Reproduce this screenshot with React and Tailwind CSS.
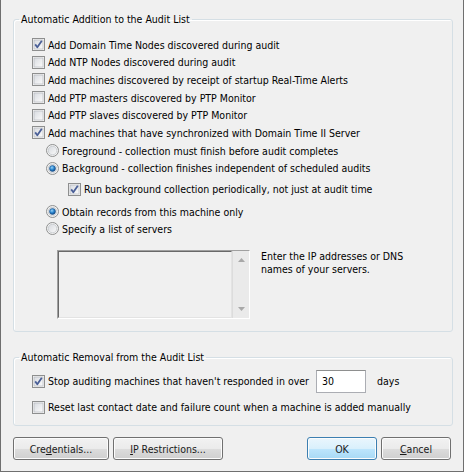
import React from "react";

const FONT = {
  fontFamily: '"DejaVu Sans Condensed", "DejaVu Sans", "Liberation Sans", sans-serif',
  fontStretch: "condensed",
};

function CheckBox({ checked }) {
  return (
    <svg width="13" height="13" viewBox="0 0 13 13" className="shrink-0">
      <defs>
        <linearGradient id="cbg" x1="0" y1="0" x2="1" y2="1">
          <stop offset="0" stopColor="#d8dbe0" />
          <stop offset="1" stopColor="#fbfbfb" />
        </linearGradient>
      </defs>
      <rect x="0.5" y="0.5" width="12" height="12" fill="#f4f4f4" stroke="#8e8f8f" />
      <rect x="2" y="2" width="9" height="9" fill="url(#cbg)" stroke="#aeb3b9" strokeWidth="0.6" />
      {checked && (
        <path d="M3.2 6.4 L5.3 9.2 L9.8 2.8" fill="none" stroke="#4a5f97" strokeWidth="1.8" strokeLinejoin="round" />
      )}
    </svg>
  );
}

function Radio({ checked }) {
  return (
    <svg width="13" height="13" viewBox="0 0 13 13" className="shrink-0">
      <defs>
        <linearGradient id="rbg" x1="0" y1="0" x2="1" y2="1">
          <stop offset="0" stopColor="#d6d9de" />
          <stop offset="1" stopColor="#fafafa" />
        </linearGradient>
        <radialGradient id="rdot" cx="0.4" cy="0.35" r="0.7">
          <stop offset="0" stopColor="#9ad3f7" />
          <stop offset="0.5" stopColor="#2b86cf" />
          <stop offset="1" stopColor="#0b3f7a" />
        </radialGradient>
      </defs>
      <circle cx="6.5" cy="6.5" r="6" fill="#f4f4f4" stroke="#8e8f8f" />
      <circle cx="6.5" cy="6.5" r="4.3" fill="url(#rbg)" stroke="#b6bac0" strokeWidth="0.6" />
      {checked && <circle cx="6.5" cy="6.5" r="3" fill="url(#rdot)" stroke="#1a4f86" strokeWidth="0.5" />}
    </svg>
  );
}

function CheckRow({ checked, children, className = "" }) {
  return (
    <div className={`flex items-center gap-[3px] ${className}`}>
      <CheckBox checked={checked} />
      <span className="whitespace-nowrap">{children}</span>
    </div>
  );
}

function RadioRow({ checked, children, className = "" }) {
  return (
    <div className={`flex items-center gap-[3px] ${className}`}>
      <Radio checked={checked} />
      <span className="whitespace-nowrap">{children}</span>
    </div>
  );
}

function Button({ children, def, className = "" }) {
  return (
    <div
      className={`h-[23px] rounded-[3px] border flex items-center justify-center text-[#1a1a1a] ${
        def
          ? "border-[#3c7fb1] bg-[linear-gradient(#eaf6fd_0%,#d9f0fc_50%,#bee6fd_50%,#a7d9f5_100%)] shadow-[inset_0_0_0_1px_#fcfcfc]"
          : "border-[#707070] bg-[linear-gradient(#f2f2f2_0%,#ebebeb_50%,#dddddd_50%,#cfcfcf_100%)] shadow-[inset_0_0_0_1px_#fcfcfc]"
      } ${className}`}
    >
      {children}
    </div>
  );
}

export default function App() {
  return (
    <div
      style={FONT}
      className="w-[464px] h-[472px] bg-[#f0f0f0] border-l border-r border-b border-[#6f6f6f] text-[10.5px] leading-[14px] text-black pt-[12px] pl-[12px] pr-[10px] flex flex-col"
    >
      <fieldset className="border border-[#d5dfe5] rounded-[3px] h-[320px] pl-[18px] pr-[10px] shadow-[inset_1px_1px_0_#ffffff]">
        <legend className="ml-[-13px] px-[2px] h-[14px] leading-[14px]">Automatic Addition to the Audit List</legend>
        <div className="flex flex-col pt-[10px]">
          <CheckRow checked className="h-[17.6px]">Add Domain Time Nodes discovered during audit</CheckRow>
          <CheckRow className="h-[17.6px]">Add NTP Nodes discovered during audit</CheckRow>
          <CheckRow className="h-[17.6px]">Add machines discovered by receipt of startup Real-Time Alerts</CheckRow>
          <CheckRow className="h-[17.6px]">Add PTP masters discovered by PTP Monitor</CheckRow>
          <CheckRow className="h-[17.6px]">Add PTP slaves discovered by PTP Monitor</CheckRow>
          <CheckRow checked className="h-[17.6px]">Add machines that have synchronized with Domain Time II Server</CheckRow>
          <div className="pl-[14px] flex flex-col">
            <RadioRow className="h-[18px]">Foreground - collection must finish before audit completes</RadioRow>
            <RadioRow checked className="h-[17px]">Background - collection finishes independent of scheduled audits</RadioRow>
            <div className="pl-[22px] mt-[3px]">
              <CheckRow checked className="h-[19px]">Run background collection periodically, not just at audit time</CheckRow>
            </div>
            <RadioRow checked className="h-[18px] mt-[4px]">Obtain records from this machine only</RadioRow>
            <RadioRow className="h-[16px]">Specify a list of servers</RadioRow>
            <div className="flex mt-[13px] pl-[11px]">
              <div className="w-[193px] h-[69px] bg-[#f0f0f0] border border-t-[#a0a0a0] border-l-[#a0a0a0] border-r-[#ffffff] border-b-[#ffffff] flex">
                <div className="flex-1 border border-t-[#696969] border-l-[#696969] border-r-[#e3e3e3] border-b-[#e3e3e3]" />
                <div className="w-[17px] bg-[#eaeaea] border-l border-[#dcdcdc] flex flex-col justify-between items-center py-[7px]">
                  <svg width="7" height="4" viewBox="0 0 7 4"><path d="M0 4 L3.5 0 L7 4 Z" fill="#a8a8a8" /></svg>
                  <svg width="7" height="4" viewBox="0 0 7 4"><path d="M0 0 L3.5 4 L7 0 Z" fill="#a8a8a8" /></svg>
                </div>
              </div>
              <div className="ml-[11px] leading-[13px]">
                Enter the IP addresses or DNS
                <br />
                names of your servers.
              </div>
            </div>
          </div>
        </div>
      </fieldset>

      <fieldset className="mt-[18px] border border-[#d5dfe5] rounded-[3px] h-[76px] pl-[18px] pr-[10px] shadow-[inset_1px_1px_0_#ffffff]">
        <legend className="ml-[-13px] px-[2px] h-[14px] leading-[14px]">Automatic Removal from the Audit List</legend>
        <div className="flex flex-col pt-[5px]">
          <div className="flex items-center h-[24px]">
            <CheckRow checked className="w-[284px]">Stop auditing machines that haven't responded in over</CheckRow>
            <div className="w-[50px] h-[23px] bg-white border border-[#abadb3] border-t-[#8e8f8f] flex items-center pl-[5px]">30</div>
            <span className="ml-[11px]">days</span>
          </div>
          <CheckRow className="h-[18px] mt-[5px]">Reset last contact date and failure count when a machine is added manually</CheckRow>
        </div>
      </fieldset>

      <div className="flex mt-[11px] pr-[2px]">
        <Button className="w-[96px]">
          <span>
            Cre<u>d</u>entials...
          </span>
        </Button>
        <Button className="w-[110px] ml-[4px]">
          <span>
            <u>I</u>P Restrictions...
          </span>
        </Button>
        <div className="flex-1" />
        <Button def className="w-[70px]">
          OK
        </Button>
        <Button className="w-[70px] ml-[4px]">
          <span>
            <u>C</u>ancel
          </span>
        </Button>
      </div>
    </div>
  );
}
